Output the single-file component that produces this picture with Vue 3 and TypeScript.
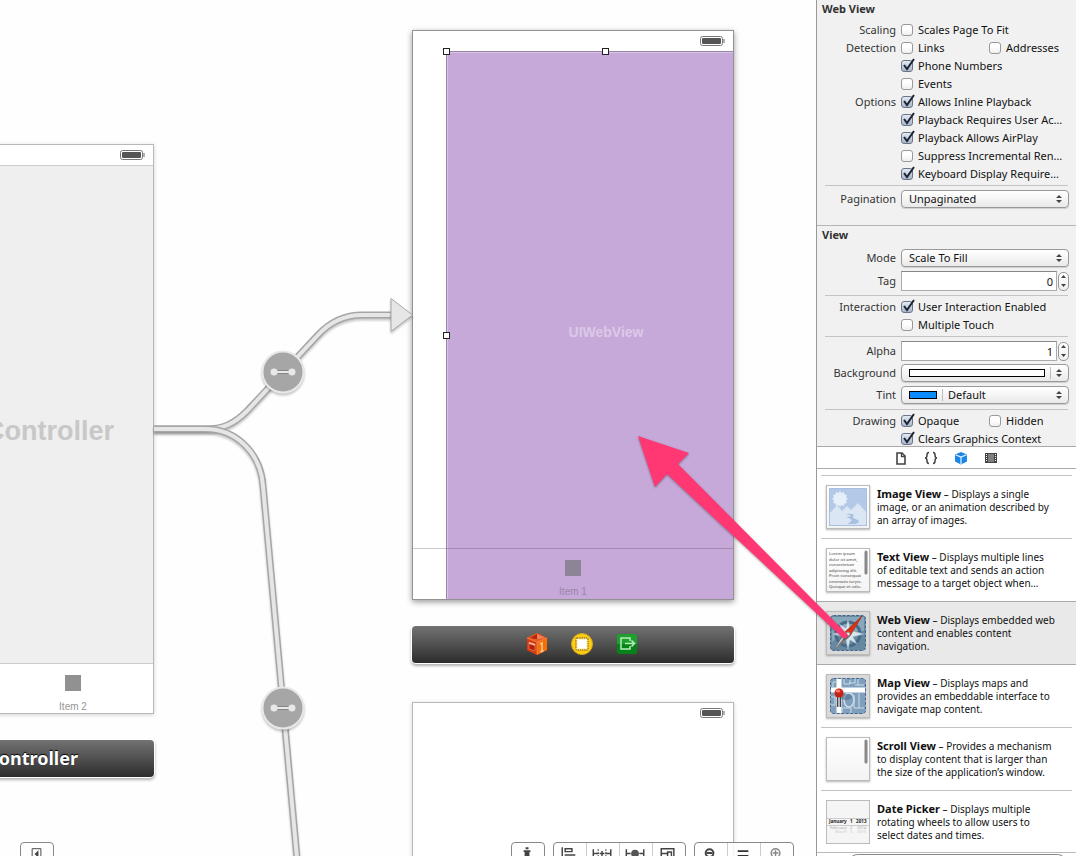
<script setup lang="ts">
import { reactive, ref } from 'vue'

interface Check { id: string; label: string; on: boolean }
interface CheckRow { title: string; items: Check[] }
interface LibraryItem { kind: string; name: string; lines: string[] }

const webRows = reactive<CheckRow[]>([
  { title: 'Scaling', items: [{ id: 'fit', label: 'Scales Page To Fit', on: false }] },
  { title: 'Detection', items: [{ id: 'links', label: 'Links', on: false }, { id: 'addr', label: 'Addresses', on: false }] },
  { title: '', items: [{ id: 'phone', label: 'Phone Numbers', on: true }] },
  { title: '', items: [{ id: 'events', label: 'Events', on: false }] },
  { title: 'Options', items: [{ id: 'inline', label: 'Allows Inline Playback', on: true }] },
  { title: '', items: [{ id: 'action', label: 'Playback Requires User Ac…', on: true }] },
  { title: '', items: [{ id: 'airplay', label: 'Playback Allows AirPlay', on: true }] },
  { title: '', items: [{ id: 'suppress', label: 'Suppress Incremental Ren…', on: false }] },
  { title: '', items: [{ id: 'keyboard', label: 'Keyboard Display Require…', on: true }] },
])
const interactionRows = reactive<CheckRow[]>([
  { title: 'Interaction', items: [{ id: 'user', label: 'User Interaction Enabled', on: true }] },
  { title: '', items: [{ id: 'multi', label: 'Multiple Touch', on: false }] },
])
const drawingRows = reactive<CheckRow[]>([
  { title: 'Drawing', items: [{ id: 'opaque', label: 'Opaque', on: true }, { id: 'hidden', label: 'Hidden', on: false }] },
  { title: '', items: [{ id: 'clears', label: 'Clears Graphics Context', on: true }] },
])
const tag = ref('0')
const alpha = ref('1')
const filter = ref('')
const selected = ref('web')

const library: LibraryItem[] = [
  { kind: 'image', name: 'Image View', lines: ['Displays a single', 'image, or an animation described by', 'an array of images.'] },
  { kind: 'text', name: 'Text View', lines: ['Displays multiple lines', 'of editable text and sends an action', 'message to a target object when…'] },
  { kind: 'web', name: 'Web View', lines: ['Displays embedded web', 'content and enables content', 'navigation.'] },
  { kind: 'map', name: 'Map View', lines: ['Displays maps and', 'provides an embeddable interface to', 'navigate map content.'] },
  { kind: 'scroll', name: 'Scroll View', lines: ['Provides a mechanism', 'to display content that is larger than', 'the size of the application’s window.'] },
  { kind: 'date', name: 'Date Picker', lines: ['Displays multiple', 'rotating wheels to allow users to', 'select dates and times.'] },
]
const lorem = ['Lorem ipsum', 'dolor sit amet,', 'consectetuer', 'adipiscing elit.', 'Proin consequat', 'venenatis turpis.', 'Quisque et odio.']
</script>

<template>
  <div class="editor">
    <main class="canvas">
      <section class="scene scene-left" aria-label="Second view controller">
        <div class="status ruled"><svg class="battery" viewBox="0 0 26 10"><rect x=".5" y=".5" width="22" height="9" rx="2" fill="#fff" stroke="#777" /><rect x="2" y="2" width="19" height="6" rx="1" fill="#555" /><path d="M23.500 3h1v4h-1z" fill="#666" /></svg></div>
        <div class="body-gray"><span>View Controller</span></div>
        <div class="tabbar"><i class="tab-icon"></i><span>Item 2</span></div>
      </section>
      <div class="dock dock-left"><span>View Controller</span></div>

      <section class="scene scene-main" aria-label="First view controller">
        <div class="status"><svg class="battery" viewBox="0 0 26 10"><rect x=".5" y=".5" width="22" height="9" rx="2" fill="#fff" stroke="#777" /><rect x="2" y="2" width="19" height="6" rx="1" fill="#555" /><path d="M23.500 3h1v4h-1z" fill="#666" /></svg></div>
        <div class="webview"><span>UIWebView</span></div>
        <div class="tabbar tinted"><i class="tab-icon"></i><span>Item 1</span></div>
        <i class="handle h-corner"></i><i class="handle h-top"></i><i class="handle h-side"></i>
      </section>
      <div class="dock dock-main">
        <svg viewBox="0 0 22 24" width="22" height="24">
          <path d="M1 6 11 1l10 5v12l-10 5-10-5z" fill="#e24a12" />
          <path d="M1 6 11 1l10 5-9 4z" fill="#e85a24" /><path d="M4 6l7-4v5z" fill="#b02608" /><path d="M11 2l8 4-8 1z" fill="#f4815a" />
          <path d="M1 6l10 4v13L1 18z" fill="#d8390e" /><path d="M11 10l10-4v12l-10 5z" fill="#f57005" />
          <path d="M3 10l6 2v7l-6-2z" fill="#b52003" stroke="#e8765a" stroke-width=".8" /><path d="M3 11l6 2" stroke="#f8bda6" stroke-width="1.500" />
          <path d="M14 12l2-1v8M14.500 20l3-1.500" fill="none" stroke="#ffc79a" stroke-width="1.500" />
          <path d="M1 6l10 4 10-4M11 10v12" fill="none" stroke="#f58b59" stroke-width=".8" />
        </svg>
        <svg viewBox="0 0 24 24" width="24" height="24"><circle cx="12" cy="12" r="10.500" fill="#fdcf18" stroke="#d8a815" /><rect x="6" y="6" width="12" height="12" rx="1" fill="#fff3bd" stroke="#a77a12" stroke-width="1.300" stroke-dasharray="1.500 .7" /><path d="M8 8h8v8H8z" fill="#fff" /></svg>
        <svg viewBox="0 0 22 22" width="22" height="22"><rect x="1" y="1" width="20" height="20" rx="2" fill="#078219" /><path d="M1 3q0-2 2-2h16q2 0 2 2v8H1z" fill="#1fa02e" /><path d="M14 8V5H5v11h9v-3M9 10.500h9M15.500 7.500l3 3-3 3" fill="none" stroke="#b7edb8" stroke-width="1.500" /></svg>
      </div>

      <section class="scene scene-third" aria-label="Third view controller">
        <div class="status"><svg class="battery" viewBox="0 0 26 10"><rect x=".5" y=".5" width="22" height="9" rx="2" fill="#fff" stroke="#777" /><rect x="2" y="2" width="19" height="6" rx="1" fill="#555" /><path d="M23.500 3h1v4h-1z" fill="#666" /></svg></div>
      </section>

      <svg class="wires" viewBox="0 0 420 880" width="420" height="880" aria-hidden="true">
        <g fill="none">
          <g class="wire">
            <path d="M154 429H205C223 429 234 424 247 411L318 335C331 321 346 315 362 315H392" stroke="#a6a6a6" stroke-width="7" />
            <path d="M154 429H205C223 429 234 424 247 411L318 335C331 321 346 315 362 315H392" stroke="#e6e6e6" stroke-width="4" />
          </g>
          <g class="wire">
            <path d="M154 429H205C238 429 261 455 263 486L299 880" stroke="#a6a6a6" stroke-width="7" />
            <path d="M154 429H205C238 429 261 455 263 486L299 880" stroke="#e6e6e6" stroke-width="4" />
          </g>
        </g>
        <path class="wire" d="M391 298.500 412.500 315 391 331.500z" fill="#e6e6e6" stroke="#a6a6a6" />
        <g v-for="y in [372, 708]" :key="y" :transform="`translate(283 ${y})`">
          <circle class="wire" r="20.500" fill="#a6a6a6" stroke="#e8e8e8" stroke-width="2" />
          <path d="M-9 0H9" stroke="#878787" stroke-width="4" /><circle cx="-9" r="4" fill="#e8e8e8" stroke="#929292" stroke-width=".6" /><circle cx="9" r="4" fill="#e8e8e8" stroke="#929292" stroke-width=".6" /><path d="M-9 0H9" stroke="#e8e8e8" stroke-width="2" />
        </g>
      </svg>

      <nav class="tools" aria-label="Canvas tools">
        <div class="group first"><button aria-label="Toggle outline"><svg viewBox="0 0 33 24"><path d="M11.500 5.500h9v12h-9z" fill="none" stroke="#444" /><path d="M18 7v8l-4-4z" fill="#444" /></svg></button></div>
        <div class="group"><button aria-label="Form factor"><svg viewBox="0 0 33 24"><path d="M14 4h3v2h-3zM12 7h7v2h-1v9h1v2h-7v-2h1V9h-1z" fill="#444" /></svg></button></div>
        <div class="group">
          <button aria-label="Align"><svg viewBox="0 0 33 24"><path d="M8.500 4v16M11.500 5.500h7v3h-7zM11 12h11" fill="none" stroke="#444" stroke-width="1.500" /></svg></button>
          <button aria-label="Pin"><svg viewBox="0 0 33 24"><path d="M6.500 6v9M24.500 6v9M7 10.500h5M19 10.500h5M13 10.500h5M15.500 8v5" fill="none" stroke="#444" stroke-width="1.500" /><path d="M11.500 6v9M19.500 6v9" stroke="#444" stroke-dasharray="2 1" /></svg></button>
          <button aria-label="Resolve"><svg viewBox="0 0 33 24"><path d="M6.500 6v9M24.500 6v9M7 10.500h4M20 10.500h4" fill="none" stroke="#444" stroke-width="1.500" /><circle cx="15.500" cy="10.500" r="4" fill="#555" /></svg></button>
          <button aria-label="Resizing"><svg viewBox="0 0 33 24"><path d="M8.500 20V5.500h13V20M8 10.500h8M15 15V9h4v9" fill="none" stroke="#444" stroke-width="1.500" /></svg></button>
        </div>
        <div class="group">
          <button aria-label="Zoom out"><svg viewBox="0 0 33 24"><circle cx="15" cy="10" r="4" fill="none" stroke="#444" stroke-width="2" /><path d="M12 10h6M18 13l4 4" stroke="#444" stroke-width="2" /></svg></button>
          <button aria-label="Actual size"><svg viewBox="0 0 33 24"><path d="M10 8h11M10 13h11" stroke="#333" stroke-width="2" /></svg></button>
          <button aria-label="Zoom in"><svg viewBox="0 0 33 24"><circle cx="15" cy="10" r="4.500" fill="none" stroke="#888" stroke-width="1.500" /><path d="M12 10h6M15 7v6M18 13l4 4" stroke="#888" stroke-width="1.500" /></svg></button>
        </div>
      </nav>
    </main>

    <aside class="inspector">
      <form class="attributes" @submit.prevent>
        <section class="panel">
          <h2>Web View</h2>
          <div v-for="(row, i) in webRows" :key="i" class="row">
            <span class="caption">{{ row.title }}</span>
            <label v-for="c in row.items" :key="c.id" class="check">
              <span class="box"><input v-model="c.on" type="checkbox" /><svg v-if="c.on" viewBox="0 0 14 14"><path d="M3 7l3 4 7-10" /></svg></span>{{ c.label }}
            </label>
          </div>
          <hr />
          <div class="row wide">
            <label class="caption" for="pagination">Pagination</label>
            <span class="popup"><select id="pagination"><option>Unpaginated</option></select><svg class="updown" viewBox="0 0 6 8"><path d="M3 0l3 3H0zM0 5h6L3 8z" /></svg></span>
          </div>
        </section>

        <section class="panel second">
          <h2>View</h2>
          <div class="row wide">
            <label class="caption" for="mode">Mode</label>
            <span class="popup"><select id="mode"><option>Scale To Fill</option></select><svg class="updown" viewBox="0 0 6 8"><path d="M3 0l3 3H0zM0 5h6L3 8z" /></svg></span>
          </div>
          <div class="row field">
            <label class="caption" for="tag">Tag</label>
            <input id="tag" v-model="tag" class="number" type="text" />
            <button class="stepper" type="button" aria-label="Step tag"><svg viewBox="0 0 5 12"><path d="M2.500 0l2.500 3H0zM0 9h5l-2.500 3z" /></svg></button>
          </div>
          <hr class="tight" />
          <div v-for="(row, i) in interactionRows" :key="i" class="row">
            <span class="caption">{{ row.title }}</span>
            <label v-for="c in row.items" :key="c.id" class="check">
              <span class="box"><input v-model="c.on" type="checkbox" /><svg v-if="c.on" viewBox="0 0 14 14"><path d="M3 7l3 4 7-10" /></svg></span>{{ c.label }}
            </label>
          </div>
          <hr />
          <div class="row field">
            <label class="caption" for="alpha">Alpha</label>
            <input id="alpha" v-model="alpha" class="number" type="text" />
            <button class="stepper" type="button" aria-label="Step alpha"><svg viewBox="0 0 5 12"><path d="M2.500 0l2.500 3H0zM0 9h5l-2.500 3z" /></svg></button>
          </div>
          <div class="row wide color">
            <label class="caption" for="background">Background</label>
            <button id="background" class="popup well" type="button"><i class="swatch stretch"></i><i class="bar"></i><svg class="updown" viewBox="0 0 6 8"><path d="M3 0l3 3H0zM0 5h6L3 8z" /></svg></button>
          </div>
          <div class="row wide color">
            <label class="caption" for="tint">Tint</label>
            <span class="popup tint"><i class="swatch blue"></i><i class="bar"></i><select id="tint"><option>Default</option></select><svg class="updown" viewBox="0 0 6 8"><path d="M3 0l3 3H0zM0 5h6L3 8z" /></svg></span>
          </div>
          <hr class="tight" />
          <div v-for="(row, i) in drawingRows" :key="i" class="row">
            <span class="caption">{{ row.title }}</span>
            <label v-for="c in row.items" :key="c.id" class="check">
              <span class="box"><input v-model="c.on" type="checkbox" /><svg v-if="c.on" viewBox="0 0 14 14"><path d="M3 7l3 4 7-10" /></svg></span>{{ c.label }}
            </label>
          </div>
        </section>
      </form>

      <nav class="tabs" aria-label="Library tabs">
        <button aria-label="File templates"><svg viewBox="0 0 14 14"><path d="M3 2h5l3 3v8H3z" fill="#fff" stroke="#444" stroke-width="1.600" /><path d="M7.500 2v3.500H11" fill="none" stroke="#444" stroke-width="1.300" /></svg></button>
        <button aria-label="Code snippets"><svg viewBox="0 0 14 14"><path d="M5 1.500C3 1.500 3 2.500 3 4s0 3-2 3c2 0 2 1.500 2 3s0 2.500 2 2.500M9 1.500c2 0 2 1 2 2.500s0 3 2 3c-2 0-2 1.500-2 3s0 2.500-2 2.500" fill="none" stroke="#444" stroke-width="1.500" /></svg></button>
        <button aria-label="Objects"><svg viewBox="0 0 14 14"><path d="M7 1l6 2.500v7L7 13.500 1 10.500v-7z" fill="#1b86e8" /><path d="M1.500 3.700L7 6l5.500-2.300M7 6v7" fill="none" stroke="#e5f3ff" stroke-width="1.200" /></svg></button>
        <button aria-label="Media"><svg viewBox="0 0 14 14"><path d="M1 2h12v10H1z" fill="#444" /><path d="M4 3h6v8H4z" fill="#808080" /><path d="M2 3h1v1H2zM2 5h1v1H2zM2 7h1v1H2zM2 9h1v1H2zM11 3h1v1h-1zM11 5h1v1h-1zM11 7h1v1h-1zM11 9h1v1h-1z" fill="#fff" /></svg></button>
      </nav>

      <ul class="library">
        <li v-for="item in library" :key="item.kind" :class="{ selected: item.kind === selected }" @click="selected = item.kind">
          <span class="thumb" :class="item.kind">
            <svg v-if="item.kind === 'image'" viewBox="0 0 42 42">
              <path d="M2 2h38v38H2z" fill="#a9c0e2" /><path d="M3 3h36v25H3z" fill="#b4c9e7" />
              <path d="M13 5l1.500 2 2.500-1 .5 2.500 2.500.5-1 2.500 2 1.500-2 1.500 1 2.500-2.500.5-.5 2.500-2.500-1-1.500 2-1.500-2-2.500 1-.5-2.500-2.500-.5 1-2.500-2-1.500 2-1.500-1-2.500 2.500-.5.5-2.500 2.500 1z" fill="#e5eef9" />
              <path d="M3 27l7-8 5 6 5-5 4 4 7-7 8 9v13H3z" fill="#dbe6f4" /><path d="M19 28c12-1 6 3 7 4 9 3 6 4 3 6h-9c8-4 4-5-1-7 5-1 8-1 0-3z" fill="#a9c0e2" />
            </svg>
            <svg v-else-if="item.kind === 'text'" viewBox="0 0 42 42">
              <text v-for="(line, i) in lorem" :key="line" x="2" :y="6 + i * 5.500" font-size="4.200" fill="#444">{{ line }}</text><path d="M39 3v21" stroke="#888" stroke-width="3" stroke-linecap="round" />
            </svg>
            <svg v-else-if="item.kind === 'web'" viewBox="0 0 42 42">
              <rect x="3.500" y="3.500" width="35" height="35" rx="3" fill="#6788a1" /><path d="M5 5h32v14Q15 18 5 30z" fill="#88a7ba" /><circle cx="21" cy="22" r="12" fill="none" stroke="#456b88" stroke-width="3" />
              <path d="M21 7l2 9 7-4-4 7 11 3-11 3 4 7-7-4-2 10-2-10-7 4 4-7-11-3 11-3-4-7 7 4z" fill="#d7e5ed" stroke="#8ca7b9" stroke-width=".6" />
              <path d="M35 4L18 20l5 4z" fill="#d83217" stroke="#9c1f0c" stroke-width=".6" /><path d="M18 20L7 38l16-14z" fill="#ddd" stroke="#666" stroke-width=".6" /><path d="M23 24L7 38l13-16z" fill="#777" /><circle cx="21" cy="22" r="2" fill="#eee" stroke="#888" />
              <rect x="3.500" y="3.500" width="35" height="35" rx="3" fill="none" stroke="#46648f" stroke-dasharray="3 1.500" />
            </svg>
            <svg v-else-if="item.kind === 'map'" viewBox="0 0 42 42">
              <rect x="3.500" y="3.500" width="35" height="35" rx="3" fill="#7f9fbc" /><path d="M12 4v34M4 15h34" stroke="#fff" stroke-width="5" />
              <path d="M6 12V7h3M17 4v5h6V5M22 8h6V4M28 10h9M31 4v6M4 22h4v8H4M27 20v13h10M32 18v15M15 38v-5h9v5" fill="none" stroke="#cbdce8" /><ellipse cx="22" cy="25" rx="5" ry="7" fill="none" stroke="#cbdce8" stroke-width="1.500" /><ellipse cx="19" cy="22" rx="6" ry="3" fill="#47637c" opacity=".5" />
              <path d="M12 21v11" stroke="#444" stroke-width="4" /><path d="M12 21v11" stroke="#ddd" stroke-width="1.500" /><circle cx="12" cy="18" r="4.500" fill="#c9200f" /><ellipse cx="11" cy="16" rx="2.500" ry="1.500" fill="#f47c6c" />
              <rect x="3.500" y="3.500" width="35" height="35" rx="3" fill="none" stroke="#46648f" stroke-dasharray="3 1.500" />
            </svg>
            <svg v-else-if="item.kind === 'scroll'" viewBox="0 0 42 42"><path d="M39 3v21" stroke="#888" stroke-width="3" stroke-linecap="round" /></svg>
            <svg v-else viewBox="0 0 42 42">
              <path d="M0 17.500h42M0 24.500h42" stroke="#ccc" /><g font-size="4.600" fill="#222" font-weight="bold"><text x="2" y="22">January</text><text x="23" y="22">1</text><text x="29" y="22">2013</text></g>
              <g font-size="4" fill="#aaa"><text x="3" y="28">February</text><text x="23" y="28">2</text><text x="30" y="28">2014</text></g><g font-size="4" fill="#ccc"><text x="8" y="32">March</text><text x="23" y="32">3</text><text x="30" y="32">2015</text></g>
            </svg>
          </span>
          <p><b>{{ item.name }}</b> – <template v-for="(line, i) in item.lines" :key="line"><br v-if="i" />{{ line }}</template></p>
        </li>
      </ul>
      <footer class="filter"><input v-model="filter" type="search" aria-label="Filter library" /></footer>
    </aside>

    <svg class="pointer" viewBox="0 0 230 220" width="230" height="220" aria-hidden="true"><path d="M8 6L59 23 48 34 218 205Q217 209 213 208L37 44 25 57z" fill="#ff3773" /></svg>
  </div>
</template>

<style>
html, body, #app { height: 100%; }
body { overflow: hidden; }
</style>

<style scoped>
* { box-sizing: border-box; }
.editor {
  position: relative; display: grid; grid-template-columns: minmax(0, 1fr) 260px;
  height: 100%; overflow: hidden; background: #fefefe; color: #111;
  font: 11px/18px "Noto Sans", sans-serif;
}
button, input, select { font: inherit; color: inherit; margin: 0; padding: 0; }
i { display: block; }

/* Canvas */
.canvas { position: relative; overflow: hidden; }
.scene {
  position: absolute; display: flex; flex-direction: column; width: 322px; height: 570px;
  background: #fff; border: 1px solid #b8b8b8; box-shadow: 0 1px 4px rgba(0, 0, 0, .18);
}
.scene-left { left: -168px; top: 144px; }
.scene-main { left: 412px; top: 30px; overflow: hidden; border-color: #929292; box-shadow: 0 2px 6px rgba(0, 0, 0, .4); }
.scene-third { left: 412px; top: 702px; }
.status { display: flex; justify-content: flex-end; height: 21px; padding: 5px 7px; }
.status.ruled { border-bottom: 1px solid #ccc; }
.battery { width: 26px; height: 10px; }
.body-gray {
  flex: 1; display: flex; align-items: center; justify-content: flex-end; padding: 32px 39px 0 0;
  background: #efefef; color: #c8c8c8; font: bold 27px/32px "Liberation Sans", sans-serif; white-space: nowrap;
}
.tabbar {
  display: flex; flex-direction: column; align-items: center; height: 51px; padding-top: 11px;
  border-top: 1px solid #ccc; color: #969696; font: 10px/12px "Liberation Sans", sans-serif;
}
.scene-left .tabbar { height: 50px; padding-left: 160px; }
.tab-icon { width: 16px; height: 16px; margin-bottom: 10px; background: #919191; }
.tinted { position: relative; margin-top: auto; border-color: rgba(90, 70, 100, .3); color: #9d84ab; }
.tinted .tab-icon { background: #8e8498; }
.webview {
  position: absolute; left: 33px; right: -32px; top: 20px; bottom: 0; display: flex; justify-content: center; align-items: center;
  padding-top: 12px; background: #c6a8d9; border-top: 1px solid #9a85a8; border-left: 1px solid #9a85a8; box-shadow: inset 1px 1px #d8c3e5;
  color: #dbcae6; font: bold 14px/16px "Liberation Sans", sans-serif;
}
.handle { position: absolute; width: 7px; height: 7px; background: #fff; border: 1px solid #222; }
.h-corner { left: 30px; top: 17px; }
.h-top { left: 189px; top: 17px; }
.h-side { left: 30px; top: 301px; }
.dock {
  position: absolute; display: flex; align-items: center; justify-content: center; gap: 22px; width: 322px; height: 37px;
  border-radius: 4px; background: linear-gradient(#727272, #505050 50%, #2c2c2c); box-shadow: 0 0 0 1px #fff, 0 2px 3px 1px rgba(0, 0, 0, .3);
}
.dock-main { left: 412px; top: 626px; padding: 0 0 2px 18px; }
.dock-left { left: -168px; top: 740px; justify-content: flex-end; padding: 0 76px 2px 0; color: #fff; font: bold 18px/24px "Noto Sans", sans-serif; text-shadow: 0 -1px 1px #000; white-space: nowrap; }
.wires { position: absolute; left: 0; top: 0; pointer-events: none; }
.wire { filter: drop-shadow(0 2px 1px rgba(0, 0, 0, .22)); }
.tools { position: absolute; left: 20px; right: 22px; bottom: -10px; display: flex; gap: 8px; }
.group { display: flex; height: 24px; border: 1px solid #888; border-radius: 4px; background: rgba(254, 254, 254, .85); }
.group.first { margin-right: auto; }
.group button { width: 33px; border: 0; border-left: 1px solid #ccc; background: none; }
.group button:first-child { width: 32px; border-left: 0; }
.group svg { display: block; width: 32px; height: 24px; }

/* Attributes */
.inspector { display: flex; flex-direction: column; min-width: 0; height: 100%; overflow: hidden; border-left: 1px solid #999; background: #fff; }
.attributes { flex: none; height: 446px; overflow: hidden; background: #f1f1f1; }
.panel { padding: 0 7px 17px 0; }
.panel.second { border-top: 1px solid #b5b5b5; }
h2 { margin: 0 0 3px; padding-left: 5px; color: #333; font-size: 11px; line-height: 18px; }
.second h2 { margin-bottom: 5px; }
.row { display: grid; grid-template-columns: 79px 88px minmax(0, 1fr); align-items: center; height: 18px; }
.caption { text-align: right; color: #333; white-space: nowrap; }
.check { display: flex; align-items: center; gap: 5px; padding-left: 5px; white-space: nowrap; }
.box { position: relative; flex: none; width: 12px; height: 12px; }
.box input { display: block; appearance: none; width: 12px; height: 12px; border: 1px solid #999; border-radius: 3px; background: linear-gradient(#fff 40%, #eee); }
.box input:checked { border-color: #69758b; background: linear-gradient(#e4eaf3, #a9b5c8); }
.box svg { position: absolute; left: 0; top: -2px; width: 14px; height: 14px; pointer-events: none; }
.box path { fill: none; stroke: #1c2434; stroke-width: 2; }
hr { height: 1px; margin: 2px 1px 4px 8px; border: 0; background: #c4c4c4; }
.row.wide { grid-template-columns: 79px minmax(0, 1fr); }
.popup {
  position: relative; display: flex; align-items: center; height: 18px; margin-left: 5px; border: 1px solid #999; border-radius: 4px;
  background: linear-gradient(#fff, #f5f5f5 50%, #e9e9e9); box-shadow: 0 1px 1px rgba(0, 0, 0, .15);
}
.popup select { appearance: none; flex: 1; min-width: 0; height: 16px; padding-left: 7px; border: 0; background: none; line-height: 16px; }
.updown { position: absolute; right: 6px; top: 4px; width: 6px; height: 8px; fill: #444; pointer-events: none; }
.row.field { grid-template-columns: 84px minmax(0, 1fr) 12px; height: 20px; margin-top: 4px; }
.row.field .caption { padding-right: 5px; }
hr + .row.field { margin-top: 0; }
hr.tight { margin-top: 4px; margin-bottom: 2px; }
.number { width: 100%; height: 20px; padding-right: 3px; border: 1px solid #aaa; border-top-color: #888; background: #fff; text-align: right; }
.stepper { display: grid; place-items: center; width: 11px; height: 19px; margin-left: 1px; border: 1px solid #999; border-radius: 5px; background: linear-gradient(#fff, #eee); }
.stepper svg { width: 5px; height: 12px; fill: #444; }
.row.color { margin-top: 4px; }
.row.field + .row.color { margin-top: 3px; }
.row.color + hr { margin-top: 5px; }
.swatch { flex: none; height: 8px; border: 1px solid #000; margin-left: 7px; }
.swatch.stretch { flex: 1; margin-right: 5px; background: #fff; }
.swatch.blue { width: 28px; margin-right: 5px; background: #0a8cff; }
.bar { width: 1px; height: 12px; background: #bbb; }
.well .bar { margin-right: 17px; }
.tint select { padding-left: 5px; }

/* Library */
.tabs { flex: none; display: flex; justify-content: center; gap: 16px; height: 23px; padding-right: 1px; border-top: 1px solid #aaa; border-bottom: 1px solid #aaa; }
.tabs button { width: 14px; border: 0; background: none; }
.tabs svg { display: block; width: 14px; height: 14px; }
.library { flex: 1; min-height: 0; margin: 0; padding: 6px 0 0; overflow: hidden; list-style: none; }
.library li { position: relative; display: flex; gap: 7px; height: 63px; padding: 10px 0 0 9px; }
.library li::before { content: ""; position: absolute; left: 4px; right: 4px; top: 0; height: 1px; background: #c4c4c4; }
.library li.selected { background: #e9e9e9; }
.library li.selected::before, .library li.selected + li::before { left: 0; right: 0; background: #aaa; }
.library p { margin: 2px 0 0; font-size: 10px; line-height: 13px; white-space: nowrap; }
.library b { font-size: 11px; }
.thumb { flex: none; width: 44px; height: 44px; border: 1px solid #bbb; background: linear-gradient(#fff, #f3f3f3); box-shadow: 0 1px 2px rgba(0, 0, 0, .3); }
.thumb.web, .thumb.map { background: #d9d9d9; }
.thumb.date { background: #f5f5f5; box-shadow: none; }
.thumb svg { display: block; width: 42px; height: 42px; }
.filter { flex: none; height: 4px; padding: 1px 9px 0 31px; border-top: 1px solid #bbb; overflow: hidden; }
.filter input { display: block; width: 100%; height: 19px; border: 1px solid #888; border-radius: 10px; background: #fff; }
.pointer { position: absolute; left: 630px; top: 430px; pointer-events: none; filter: drop-shadow(0 1px 1px rgba(0, 0, 0, .35)); }
</style>
